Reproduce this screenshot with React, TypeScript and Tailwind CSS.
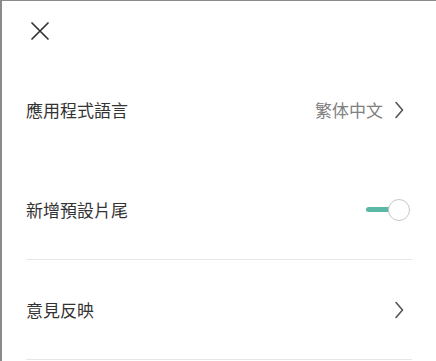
import React from "react";

const Chevron = () => (
  <svg width="10" height="18" viewBox="0 0 10 18" className="block">
    <path d="M2 1.5 L8.5 9 L2 16.5" fill="none" stroke="#555" strokeWidth="1.6" strokeLinecap="round" strokeLinejoin="round" />
  </svg>
);

const Row = ({ label, right, divider }: { label: string; right: React.ReactNode; divider?: boolean }) => (
  <div className={`flex h-[100px] items-center justify-between ${divider ? "border-b border-[#e6e6e6]" : ""}`}>
    <span className="text-[17px] text-[#333]">{label}</span>
    {right}
  </div>
);

export default function App() {
  return (
    <div
      className="h-[361px] w-[436px] overflow-hidden border-t border-l-2 border-[#8a8a8a] bg-white"
      style={{ fontFamily: '"Noto Sans CJK TC", "Noto Sans", sans-serif' }}
    >
      <div className="flex h-[59px] items-center pl-[28px]">
        <svg width="20" height="20" viewBox="0 0 20 20">
          <path d="M2 2 L18 18 M18 2 L2 18" stroke="#333" strokeWidth="1.7" strokeLinecap="round" />
        </svg>
      </div>
      <div className="ml-[24px] mr-[24px]">
        <Row
          label="應用程式語言"
          right={
            <div className="flex items-center gap-[11px] pr-[8px]">
              <span className="text-[17px] text-[#808080]">繁体中文</span>
              <Chevron />
            </div>
          }
        />
        <Row
          label="新增預設片尾"
          divider
          right={
            <div className="flex items-center pr-[2px]">
              <div className="h-[5px] w-[24px] -mr-[2px] rounded-l-full bg-[#5bb8a6]" />
              <div className="h-[22px] w-[22px] rounded-full border-[1.5px] border-[#c8c8c8] bg-white" />
            </div>
          }
        />
        <Row
          label="意見反映"
          divider
          right={
            <div className="pr-[8px]">
              <Chevron />
            </div>
          }
        />
      </div>
    </div>
  );
}
